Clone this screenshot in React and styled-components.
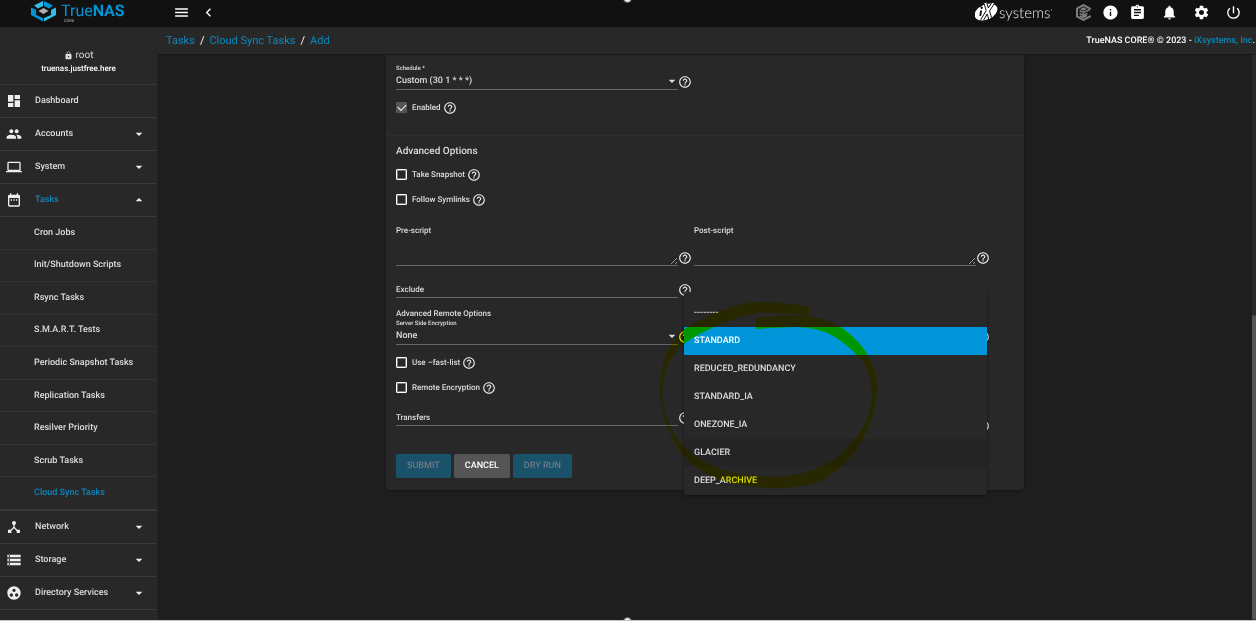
import React from 'react';
import styled, { createGlobalStyle } from 'styled-components';
import {
  MdArrowDropDown,
  MdArrowDropUp,
  MdAssignment,
  MdChevronLeft,
  MdDashboard,
  MdDateRange,
  MdDeviceHub,
  MdGroupWork,
  MdHelpOutline,
  MdInfo,
  MdLaptop,
  MdLock,
  MdMenu,
  MdNotifications,
  MdPeople,
  MdPowerSettingsNew,
  MdSettings,
  MdStorage,
} from 'react-icons/md';

const GlobalStyle = createGlobalStyle`
  * {
    box-sizing: border-box;
  }

  body {
    margin: 0;
    background: #1e1e1e;
    color: #dedede;
    font-family: Roboto, sans-serif;
    font-size: 9px;
    font-weight: 500;
    text-rendering: geometricPrecision;
  }

  button, input, select, textarea {
    margin: 0;
    padding: 0;
    border: 0;
    background: none;
    color: inherit;
    font: inherit;
    text-rendering: inherit;
  }

  a {
    text-decoration: none;
  }
`;

const Page = styled.div`
  position: relative;
  display: flex;
  flex-direction: column;
  height: 100vh;
  overflow: hidden;
  border-bottom: 1px solid #c4c4c4;
`;

const Grip = styled.span`
  position: absolute;
  left: 50%;
  ${props => props.$edge}: -6px;
  width: 9px;
  height: 9px;
  margin-left: -5px;
  border: 1px solid #555;
  border-radius: 50%;
  background: #eee;
  z-index: 5;
`;

const TopBar = styled.header`
  display: flex;
  align-items: center;
  flex: none;
  height: 27px;
  padding: 0 14px 3px 0;
  background: #111;
  color: #fff;
`;

const LogoLink = styled.a`
  display: flex;
  flex: none;
  width: 158px;
  padding-left: 31px;
`;

const BarGroup = styled.div`
  display: flex;
  align-items: center;
  gap: ${props => props.$gap}px;
  margin-left: ${props => props.$space || '0'};
`;

const IconButton = styled.button`
  display: flex;
  font-size: 17px;
  cursor: pointer;
`;

const Body = styled.div`
  display: flex;
  flex: 1;
  min-height: 0;
`;

const Sidebar = styled.nav`
  flex: none;
  width: 158px;
  overflow: hidden;
  background: #282828;
  border-right: 1px solid #232323;
`;

const Profile = styled.div`
  display: flex;
  flex-direction: column;
  align-items: center;
  justify-content: center;
  height: 58px;
  padding-top: 12px;
  border-bottom: 1px solid #363636;
  line-height: 13px;
`;

const User = styled.span`
  display: flex;
  align-items: center;
  gap: 3px;
  font-size: 10px;
  font-weight: 400;
`;

const Host = styled.span`
  font-size: 8px;
  color: #fff;
`;

const MenuList = styled.ul`
  margin: 0;
  padding: 0;
  list-style: none;
`;

const MenuLink = styled.a`
  display: flex;
  align-items: center;
  height: 33px;
  padding: 0 10px 0 6px;
  border-bottom: 1px solid #3a3a3a;
  color: ${props => (props.$active ? '#0c87bf' : '#dedede')};

  svg {
    flex: none;
    width: 16px;
    height: 16px;
    color: #eee;
  }

  span {
    flex: 1;
    padding-left: 13px;
  }
`;

const SubMenu = styled.ul`
  display: grid;
  grid-auto-rows: 1fr;
  height: 294px;
  margin: 0;
  padding: 0;
  border-bottom: 1px solid #3a3a3a;
  list-style: none;
`;

const SubLink = styled.a`
  display: flex;
  align-items: center;
  height: 100%;
  padding-left: 34px;
  border-bottom: 1px solid ${props => (props.$active ? '#3a3a3a' : '#333')};
  color: ${props => (props.$active ? '#0c87bf' : '#dedede')};
`;

const Main = styled.div`
  display: flex;
  flex-direction: column;
  flex: 1;
  min-width: 0;
`;

const Breadcrumbs = styled.div`
  display: flex;
  align-items: center;
  justify-content: space-between;
  flex: none;
  height: 28px;
  padding: 0 1px 0 8px;
  border-bottom: 1px solid #181818;
  background: #282828;
  color: #fff;

  a {
    color: #0c87bf;
  }
`;

const Trail = styled.div`
  display: flex;
  gap: 5px;
  font-size: 11px;
  font-weight: 400;
`;

const Copyright = styled.div`
  white-space: nowrap;
`;

const Scroller = styled.div`
  display: flex;
  flex: 1;
  min-height: 0;
`;

const Content = styled.main`
  flex: 1;
  min-width: 0;
`;

const ScrollTrack = styled.div`
  display: flex;
  flex-direction: column;
  justify-content: flex-end;
  flex: none;
  width: 4px;
  background: #2a2a2a;
`;

const ScrollThumb = styled.div`
  height: 54%;
  border-radius: 2px;
  background: #555;
`;

const Card = styled.form`
  position: relative;
  max-width: 638px;
  margin: 0 auto;
  padding-bottom: 12px;
  border-radius: 0 0 4px 4px;
  background: #282828;
  box-shadow: 0 1px 2px rgba(0, 0, 0, 0.3);
`;

const Section = styled.section`
  padding: ${props => props.$pad};
  border-bottom: ${props => (props.$divided ? '1px solid #2e2e2e' : '0')};
`;

const SectionTitle = styled.h2`
  margin: 0 0 2px;
  font-size: 10px;
  line-height: 16px;
  font-weight: 500;
`;

const SubTitle = styled.h3`
  margin: 11px 0 0;
  font-size: 8px;
  line-height: 10px;
  font-weight: 500;
`;

const Columns = styled.div`
  display: grid;
  grid-template-columns: repeat(2, minmax(0, 298px));
  align-items: start;
  margin-top: ${props => props.$space || 0}px;
`;

const FieldRow = styled.div`
  position: relative;
  display: flex;
  align-items: flex-end;
`;

const Field = styled.div`
  display: grid;
  flex: 1;
  border-bottom: 1px solid #666;
`;

const FieldLabel = styled.label`
  min-height: 8px;
  font-size: 8px;
  line-height: 16px;
`;

const SmallLabel = styled(FieldLabel)`
  font-size: 6px;
  line-height: 9px;
  height: 8px;
`;

const InsideLabel = styled(FieldLabel)`
  grid-area: 1 / 1;
  align-self: end;
  line-height: 14px;
`;

const TextInput = styled.input`
  grid-area: 1 / 1;
  width: 100%;
  height: 16px;
`;

const TextArea = styled.textarea`
  display: block;
  width: 100%;
  height: ${props => props.$height}px;
  resize: vertical;
`;

const SelectBox = styled.div`
  display: grid;
  align-items: center;
  height: 17px;

  select {
    grid-area: 1 / 1;
    width: 100%;
    appearance: none;
    outline: 0;
  }

  svg {
    grid-area: 1 / 1;
    justify-self: end;
    width: 16px;
    height: 16px;
    margin-right: -2px;
    pointer-events: none;
  }
`;

const Help = styled.button.attrs({ type: 'button', 'aria-label': 'Help' })`
  display: flex;
  flex: none;
  width: 16px;
  padding-bottom: 1px;
  font-size: 14px;
  color: #eee;
`;

const CheckRow = styled.div`
  display: flex;
  align-items: center;
  height: 25px;

  label {
    display: flex;
    align-items: center;
    gap: 5px;
    padding-right: 2px;
    font-size: 8px;
  }

  button {
    padding: 0;
  }
`;

const CheckBox = styled.input.attrs({ type: 'checkbox' })`
  display: grid;
  place-items: center;
  width: 11px;
  height: 11px;
  appearance: none;
  border: 1px solid #fff;
  border-radius: 1px;
  box-shadow: inset 0 0 0 1px rgba(255, 255, 255, 0.4);

  &:checked {
    border: 0;
    background: #555;
    box-shadow: none;
  }

  &:checked::after {
    content: '';
    width: 7px;
    height: 4px;
    margin-bottom: 2px;
    border: solid #fff;
    border-width: 0 0 1px 1px;
    transform: rotate(-45deg);
  }
`;

const Checks = styled.div`
  margin-top: ${props => props.$space || 0}px;
`;

const Actions = styled.div`
  display: flex;
  gap: 3px;
  margin-top: 20px;
`;

const Button = styled.button`
  height: 24px;
  padding: 0 11px;
  border-radius: 2px;
  background: ${props => (props.$primary ? '#1a526c' : '#555')};
  color: ${props => (props.$primary ? '#6f7c83' : '#fff')};
`;

const Menu = styled.ul`
  position: absolute;
  top: -27px;
  left: -10px;
  right: 5px;
  z-index: 2;
  margin: 0;
  padding: 7px 0 0;
  border-radius: 2px;
  background: #282828;
  box-shadow: 0 1px 3px rgba(0, 0, 0, 0.5);
  list-style: none;
`;

const Option = styled.li`
  height: 28px;
  padding-left: 10px;
  line-height: 28px;
  color: ${props => (props.$selected ? '#fff' : '#dedede')};
  background: ${props => (props.$selected ? '#0096d9' : props.$hovered ? '#242424' : 'none')};
`;

const Marker = styled.svg`
  position: absolute;
  top: 235px;
  left: 254px;
  z-index: 3;
  mix-blend-mode: multiply;
  pointer-events: none;
`;

const menuTop = [
  { label: 'Dashboard', icon: MdDashboard },
  { label: 'Accounts', icon: MdPeople, arrow: MdArrowDropDown },
  { label: 'System', icon: MdLaptop, arrow: MdArrowDropDown },
  { label: 'Tasks', icon: MdDateRange, arrow: MdArrowDropUp, active: true },
];

const taskPages = [
  'Cron Jobs',
  'Init/Shutdown Scripts',
  'Rsync Tasks',
  'S.M.A.R.T. Tests',
  'Periodic Snapshot Tasks',
  'Replication Tasks',
  'Resilver Priority',
  'Scrub Tasks',
  'Cloud Sync Tasks',
];

const menuBottom = [
  { label: 'Network', icon: MdDeviceHub, arrow: MdArrowDropDown },
  { label: 'Storage', icon: MdStorage, arrow: MdArrowDropDown },
  { label: 'Directory Services', icon: MdGroupWork, arrow: MdArrowDropDown },
];

const storageClasses = [
  '--------',
  'STANDARD',
  'REDUCED_REDUNDANCY',
  'STANDARD_IA',
  'ONEZONE_IA',
  'GLACIER',
  'DEEP_ARCHIVE',
];

const markerOuter = [
  [809, 307], [783, 302], [750, 302], [730, 307], [706, 317], [684, 328], [670, 345], [663, 362],
  [659, 388], [662, 412], [673, 442], [690, 464], [720, 481], [753, 487], [783, 489], [817, 484],
  [840, 469], [860, 446], [873, 416], [877, 395], [877, 378], [870, 358], [860, 343], [843, 328],
  [827, 320], [809, 315], [793, 315], [773, 316], [756, 318],
];

const markerInner = [
  [756, 329], [783, 327], [807, 327], [827, 332], [843, 342], [856, 354], [867, 367], [873, 395],
  [867, 422], [853, 442], [833, 462], [800, 475], [773, 477], [740, 475], [713, 467], [687, 452],
  [670, 428], [662, 402], [662, 385], [669, 360], [684, 342], [717, 325], [750, 313], [783, 313],
  [809, 315],
];

// joins the points with quadratic curves through their midpoints
const curve = points =>
  points
    .slice(1, -1)
    .map(([x, y], i) => {
      const [nx, ny] = points[i + 2];
      return `Q${x} ${y} ${(x + nx) / 2} ${(y + ny) / 2}`;
    })
    .concat(`L${points[points.length - 1].join(' ')}`)
    .join('');

const markerPath = `M809 307${curve(markerOuter)}L756 329${curve(markerInner)}Z`;

const TrueNasLogo = () => (
  <svg width="100" height="22" viewBox="0 0 100 22" role="img" aria-label="TrueNAS CORE">
    <path d="M12 0 3 4.500l4 3 5-2.500z" fill="#31beec" />
    <path d="m13 0 9 4.500-4 3-5-2.500z" fill="#0095d5" />
    <path d="M0 6.500 5 9v5l7 3v3.500L0 14z" fill="#0095d5" />
    <path d="M25 6.500 20 9v5l-7 3v3.500L25 14z" fill="#31beec" />
    <path d="m12.500 7 5 3-5 3-5-3z" fill="#aeb0b4" />
    <text x="30" y="15" fill="#0095d5" fontSize="16" fontWeight="400">
      True<tspan fontWeight="700">NAS</tspan>
    </text>
    <text x="33" y="21" fill="#999" fontSize="4" fontWeight="500">CORE</text>
  </svg>
);

const IxLogo = () => (
  <svg width="78" height="22" viewBox="0 0 78 22" role="img" aria-label="iXsystems">
    <ellipse cx="11" cy="11" rx="12" ry="7.500" transform="rotate(-24 11 11)" fill="#fff" />
    <path d="m9 2.500 2 7-5.500 9.500h3l3.800-6.500L14 18l2.500-1.500-2.200-7L19 2h-3l-2.800 4.700L12 1.500z" fill="#fff" />
    <path d="m9.200 3 2 6.500-5.500 9.500M11.800 2l1.500 5L16.500 2M8.700 19l3.500-6 1.500 5M19.500 2.500l-5 7.300 2 7" stroke="#111" strokeWidth="1" fill="none" />
    <path d="M6.200 9.500 5.200 15" stroke="#111" strokeWidth="1.800" />
    <circle cx="6.700" cy="6.700" r="1.200" fill="#111" />
    <text x="24" y="17" fill="#e8e8e8" fontSize="15" fontWeight="300" fontFamily="Lato, sans-serif">systems</text>
    <path d="M76 9h1" stroke="#bbb" />
  </svg>
);

const CommandIcon = () => (
  <svg width="17" height="17" viewBox="0 0 17 17" fill="none" stroke="#7d7d7d" strokeWidth="2">
    <path d="M15 5.500V4.500L8.500 1 2 4.500v8L8.500 16l6.500-3.500v-1" />
    <path d="M15 5.500 8.500 8.500 4.500 6.500M8.500 8.500V14M4.500 9.500l4 2 4-2M5 12l3 1.500 4-2" strokeWidth="1.400" />
    <path d="m5 5 3.500-1.800L12 5 8.500 6.800z" fill="#7d7d7d" strokeWidth="0" />
  </svg>
);

const HelpIcon = () => (
  <Help>
    <MdHelpOutline />
  </Help>
);

const MenuItem = ({ label, icon: Icon, arrow: Arrow, active }) => (
  <MenuLink href="#" $active={active}>
    <Icon />
    <span>{label}</span>
    {Arrow ? <Arrow /> : null}
  </MenuLink>
);

const SelectField = ({ id, label, value, children }) => (
  <FieldRow>
    <Field>
      <SmallLabel htmlFor={id}>{label}</SmallLabel>
      <SelectBox>
        <select id={id} defaultValue={value}>
          <option>{value}</option>
        </select>
        <MdArrowDropDown />
      </SelectBox>
    </Field>
    <HelpIcon />
    {children}
  </FieldRow>
);

const InputField = ({ id, label }) => (
  <FieldRow>
    <Field>
      <InsideLabel htmlFor={id}>{label}</InsideLabel>
      <TextInput id={id} />
    </Field>
    <HelpIcon />
  </FieldRow>
);

const TextAreaField = ({ id, label }) => (
  <FieldRow>
    <Field>
      <FieldLabel htmlFor={id}>{label}</FieldLabel>
      <TextArea id={id} $height={26} />
    </Field>
    <HelpIcon />
  </FieldRow>
);

const CheckField = ({ label, checked }) => (
  <CheckRow>
    <label>
      <CheckBox defaultChecked={checked} />
      {label}
    </label>
    <HelpIcon />
  </CheckRow>
);

const App = () => (
  <Page>
    <GlobalStyle />
    <Grip $edge="top" />
    <Grip $edge="bottom" />
    <TopBar>
      <LogoLink href="#">
        <TrueNasLogo />
      </LogoLink>
      <BarGroup $gap={10} $space="15px">
        <IconButton aria-label="Toggle menu"><MdMenu /></IconButton>
        <IconButton aria-label="Collapse menu"><MdChevronLeft /></IconButton>
      </BarGroup>
      <BarGroup $gap={10} $space="auto">
        <BarGroup $gap={22}>
          <IxLogo />
          <IconButton aria-label="TrueCommand"><CommandIcon /></IconButton>
        </BarGroup>
        <IconButton aria-label="Status"><MdInfo /></IconButton>
        <IconButton aria-label="Task manager"><MdAssignment /></IconButton>
      </BarGroup>
      <BarGroup $gap={15} $space="15px">
        <IconButton aria-label="Alerts"><MdNotifications /></IconButton>
        <IconButton aria-label="Settings"><MdSettings /></IconButton>
        <IconButton aria-label="Power"><MdPowerSettingsNew /></IconButton>
      </BarGroup>
    </TopBar>
    <Body>
      <Sidebar>
        <Profile>
          <User><MdLock size={9} />root</User>
          <Host>truenas.justfree.here</Host>
        </Profile>
        <MenuList>
          {menuTop.map(item => <li key={item.label}><MenuItem {...item} /></li>)}
          <li>
            <SubMenu>
              {taskPages.map(page => (
                <li key={page}>
                  <SubLink href="#" $active={page === 'Cloud Sync Tasks'}>{page}</SubLink>
                </li>
              ))}
            </SubMenu>
          </li>
          {menuBottom.map(item => <li key={item.label}><MenuItem {...item} /></li>)}
        </MenuList>
      </Sidebar>
      <Main>
        <Breadcrumbs>
          <Trail>
            <a href="#">Tasks</a>
            <span>/</span>
            <a href="#">Cloud Sync Tasks</a>
            <span>/</span>
            <a href="#">Add</a>
          </Trail>
          <Copyright>
            TrueNAS CORE® © 2023 - <a href="#">iXsystems, Inc</a>.
          </Copyright>
        </Breadcrumbs>
        <Scroller>
          <Content>
            <Card>
              <Section $pad="9px 10px 15px" $divided>
                <Columns>
                  <SelectField id="schedule" label="Schedule *" value="Custom (30 1 * * *)" />
                </Columns>
                <Checks $space={5}>
                  <CheckField label="Enabled" checked />
                </Checks>
              </Section>
              <Section $pad="8px 10px 0">
                <SectionTitle>Advanced Options</SectionTitle>
                <Checks>
                  <CheckField label="Take Snapshot" />
                  <CheckField label="Follow Symlinks" />
                </Checks>
                <Columns $space={11}>
                  <TextAreaField id="pre-script" label="Pre-script" />
                  <TextAreaField id="post-script" label="Post-script" />
                </Columns>
                <Columns $space={15}>
                  <InputField id="exclude" label="Exclude" />
                </Columns>
                <SubTitle>Advanced Remote Options</SubTitle>
                <Columns>
                  <SelectField id="encryption" label="Server Side Encryption" value="None" />
                  <SelectField id="storage-class" value="STANDARD">
                    <Menu role="listbox">
                      {storageClasses.map(name => (
                        <Option
                          key={name}
                          role="option"
                          $selected={name === 'STANDARD'}
                          $hovered={name === 'GLACIER'}
                        >
                          {name}
                        </Option>
                      ))}
                    </Menu>
                  </SelectField>
                </Columns>
                <Checks $space={5}>
                  <CheckField label="Use –fast-list" />
                  <CheckField label="Remote Encryption" />
                </Checks>
                <Columns $space={9}>
                  <InputField id="transfers" label="Transfers" />
                  <FieldRow>
                    <Field>
                      <TextArea aria-label="Bandwidth Limit" $height={24} />
                    </Field>
                    <HelpIcon />
                  </FieldRow>
                </Columns>
                <Actions>
                  <Button type="submit" $primary disabled>SUBMIT</Button>
                  <Button type="button">CANCEL</Button>
                  <Button type="button" $primary disabled>DRY RUN</Button>
                </Actions>
              </Section>
              <Marker width="250" height="210" viewBox="640 290 250 210">
                <path d={markerPath} fill="#ff0" />
              </Marker>
            </Card>
          </Content>
          <ScrollTrack>
            <ScrollThumb />
          </ScrollTrack>
        </Scroller>
      </Main>
    </Body>
  </Page>
);

export default App;
